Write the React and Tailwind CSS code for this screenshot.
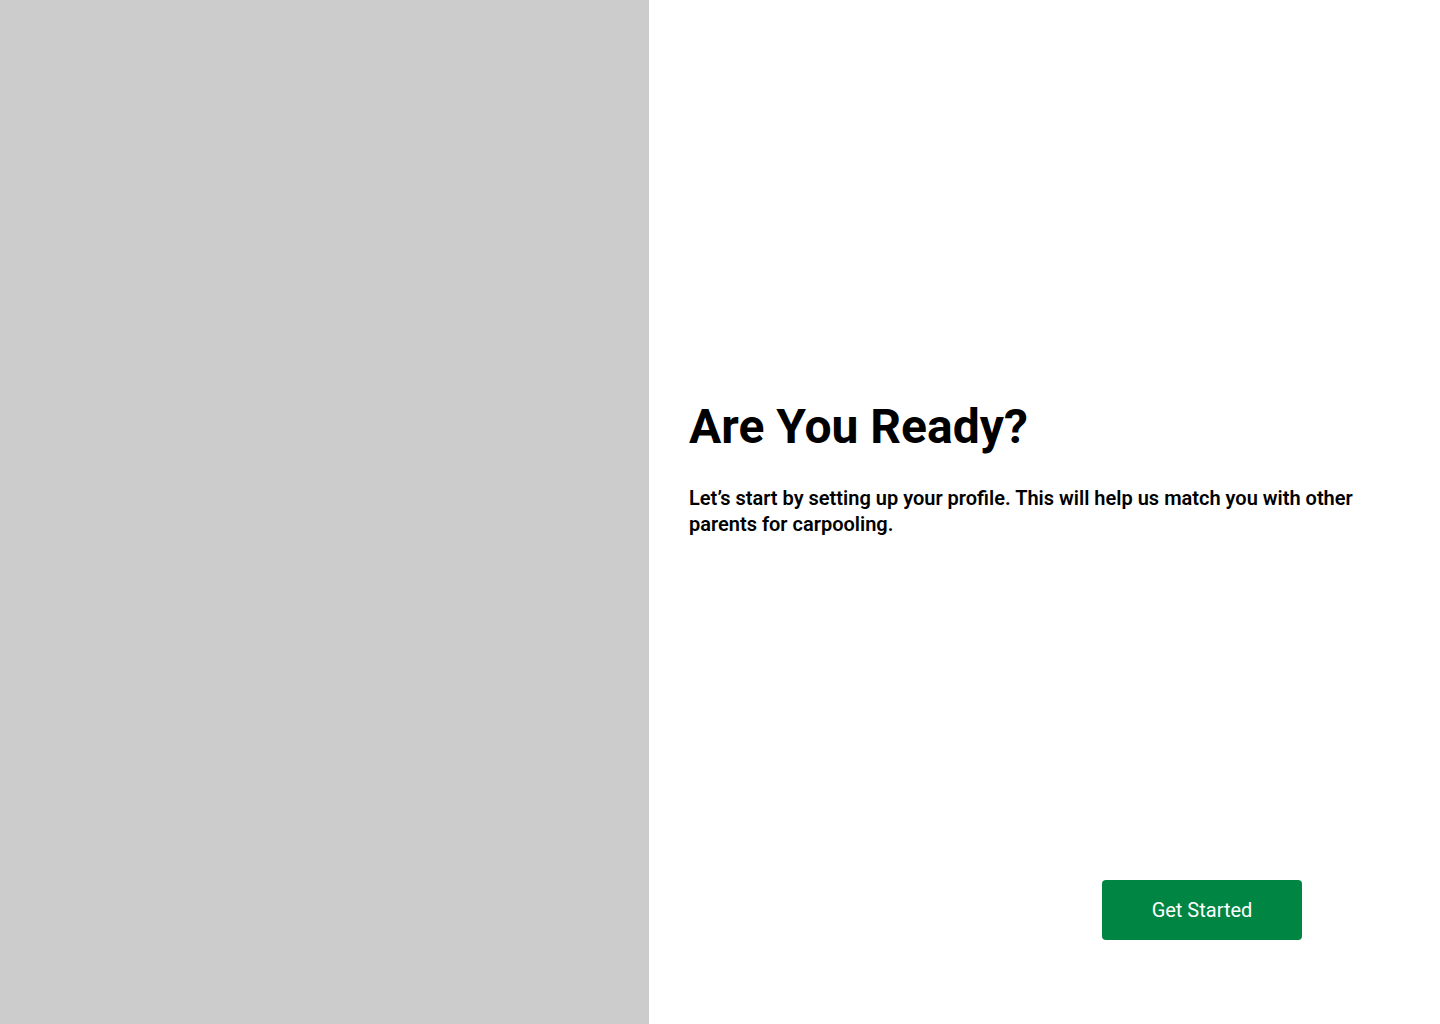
import React from "react";

function App() {
  return (
    <div className="flex h-[1024px] w-[1440px] font-['Roboto',sans-serif]">
      {/* left image placeholder */}
      <div className="w-[649px] h-full bg-[#cccccc]" />

      {/* right content */}
      <div className="flex flex-1 flex-col bg-white px-10">
        <div className="pt-[397px]">
          <h1 className="text-[48px] font-bold leading-[60px] text-black">
            Are You Ready?
          </h1>
          <p className="mt-[28px] text-[20px] font-semibold leading-[26px] text-black">
            Let’s start by setting up your profile. This will help us match you with other parents for carpooling.
          </p>
        </div>

        <div className="mt-auto mb-[84px] flex justify-end pr-[98px]">
          <button className="flex h-[60px] w-[200px] items-center justify-center rounded-[4px] bg-[#008542] text-[20px] font-normal text-white">
            Get Started
          </button>
        </div>
      </div>
    </div>
  );
}

export default App;
